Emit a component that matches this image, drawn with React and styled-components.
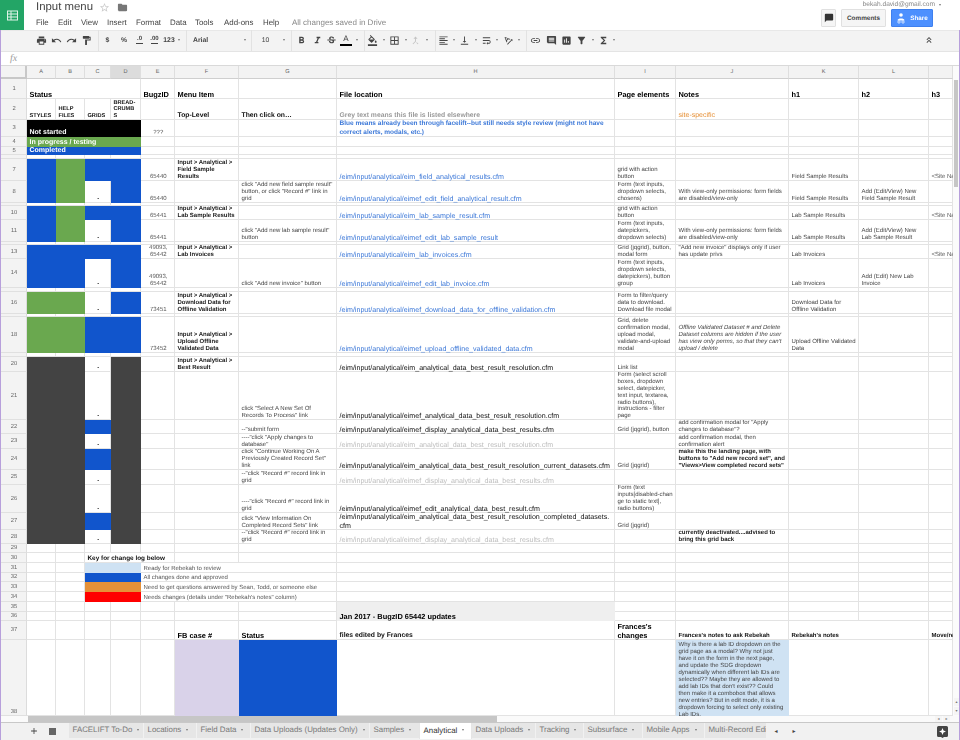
import React from 'react';
import styled, { createGlobalStyle, css } from 'styled-components';
import {
  MdPrint, MdUndo, MdRedo, MdFormatPaint, MdFormatBold, MdFormatItalic, MdStrikethroughS,
  MdFormatColorFill, MdBorderAll, MdFormatAlignLeft, MdVerticalAlignBottom, MdWrapText,
  MdTextRotationAngleup, MdLink, MdInsertComment, MdInsertChart, MdFilterAlt, MdFunctions,
  MdKeyboardDoubleArrowUp, MdChatBubble, MdAdd, MdStarBorder, MdFolder, MdCallMerge,
} from 'react-icons/md';

const GlobalStyle = createGlobalStyle`
  html, body { margin: 0; height: 100%; overflow: hidden; background: #fff; }
  body { font-family: "Liberation Sans", Arial, sans-serif; text-rendering: geometricPrecision; }
  * { box-sizing: border-box; }
`;

const GRID_COLUMNS = '26px 29px 29px 26px 30px 34px 64px 98px 278px 61px 113px 70px 70px 24px';
const COLS = ['A', 'B', 'C', 'D', 'E', 'F', 'G', 'H', 'I', 'J', 'K', 'L', 'M'];
const LINE = '#e3e3e3';

const BLUE = '#1155cc';
const GREEN = '#6aa84f';
const DARK = '#434343';
const BLACK = '#000000';
const LIGHT = '#cfe2f3';
const ORANGE = '#e69138';
const RED = '#ff0000';
const LILAC = '#d9d2e9';
const GREY = '#efefef';

const Page = styled.div`
  width: 960px;
  height: 740px;
  display: flex;
  flex-direction: column;
  overflow: hidden;
  filter: blur(0.3px);
`;

const Header = styled.header`
  height: 30px;
  display: flex;
  flex: none;
`;

const Logo = styled.div`
  width: 24px;
  height: 30px;
  background: #23a566;
  display: flex;
  align-items: center;
  justify-content: center;
  margin-right: 12px;
`;

const TitleBlock = styled.div`
  display: flex;
  flex-direction: column;
`;

const TitleRow = styled.div`
  display: flex;
  align-items: center;
  height: 14px;
  color: #bbb;
`;

const Title = styled.span`
  font-size: 11.4px;
  color: #444;
  width: 63px;
`;

const Star = styled(MdStarBorder)`
  width: 11px;
  height: 11px;
  color: #ccc;
  margin-right: 7px;
`;

const Folder = styled(MdFolder)`
  width: 11px;
  height: 11px;
  color: #777;
`;

const MenuBar = styled.nav`
  display: flex;
  align-items: center;
  height: 14px;
  font-size: 7.9px;
  color: #444;
  margin-top: 1px;
`;

const MenuItem = styled.span`
  width: ${(p) => p.$w}px;
`;

const SavedNote = styled.span`
  font-size: 8px;
  color: #888;
`;

const Account = styled.div`
  margin-left: auto;
  margin-right: 27px;
  display: flex;
  flex-direction: column;
  align-items: flex-end;
`;

const Email = styled.div`
  height: 8px;
  font-size: 6.6px;
  line-height: 6px;
  color: #888;
  display: flex;
  align-items: center;
  gap: 4px;
  margin-right: -8px;
  padding-top: 1px;
`;

const Actions = styled.div`
  display: flex;
  gap: 5px;
  margin-top: 1px;
`;

const GreyButton = styled.div`
  height: 18px;
  width: ${(p) => p.$w}px;
  background: #f5f5f5;
  border: 1px solid #e0e0e0;
  border-radius: 1px;
  display: flex;
  align-items: center;
  justify-content: center;
  font-size: 6.4px;
  font-weight: bold;
  color: #444;
  svg { width: 10px; height: 10px; color: #333; }
`;

const ShareButton = styled.div`
  height: 18px;
  width: 42px;
  background: #4d90fe;
  border: 1px solid #3f80ee;
  border-radius: 1px;
  display: flex;
  align-items: center;
  justify-content: center;
  gap: 4px;
  font-size: 6.3px;
  font-weight: bold;
  color: #fff;
`;

const Main = styled.main`
  flex: 1;
  min-height: 0;
  display: flex;
  flex-direction: column;
  border-left: 1px solid #b79fdb;
  border-right: 1px solid #b79fdb;
`;

const Toolbar = styled.div`
  height: 22px;
  flex: none;
  background: #f3f3f3;
  border-top: 1px solid #e8e8e8;
  border-bottom: 1px solid #e4e4e4;
  display: flex;
  align-items: center;
  padding-left: 32px;
  padding-bottom: 2px;
  color: #444;
`;

const Tool = styled.span`
  width: ${(p) => p.$w}px;
  flex: none;
  display: flex;
  align-items: center;
  justify-content: ${(p) => (p.$left ? 'flex-start' : 'center')};
  padding-left: ${(p) => p.$pad || 0}px;
  font-size: 6.4px;
  font-weight: bold;
  color: ${(p) => (p.$off ? '#c4c4c4' : '#444')};
  svg { width: 11px; height: 11px; }
`;

const ToolLabel = styled.span`
  font-size: 6.8px;
  color: #444;
  font-weight: ${(p) => (p.$plain ? 'normal' : 'bold')};
`;

const DecimalArrow = styled.span`
  display: inline-flex;
  flex-direction: column;
  align-items: center;
  font-size: 6px;
  line-height: 6px;
  height: 9px;
  &::after {
    content: '';
    width: 7px;
    height: 1px;
    margin-top: 1px;
    background: #444;
  }
`;

const TextColor = styled.span`
  display: inline-flex;
  flex-direction: column;
  align-items: center;
  font-size: 8px;
  line-height: 8px;
  font-weight: normal;
  &::after {
    content: '';
    width: 12px;
    height: 2px;
    margin-top: 1px;
    background: #000;
  }
`;

const Caret = styled.i`
  display: block;
  width: 0;
  height: 0;
  border-left: 1.5px solid transparent;
  border-right: 1.5px solid transparent;
  border-top: 2px solid #777;
`;

const ToolDivider = styled.span`
  width: 1px;
  height: 21px;
  flex: none;
  background: #e2e2e2;
  margin-left: ${(p) => p.$gap ?? 4}px;
`;

const Collapse = styled.span`
  margin-left: auto;
  margin-right: 25px;
  display: flex;
  svg { width: 10px; height: 10px; color: #444; }
`;

const FormulaBar = styled.div`
  height: 14px;
  flex: none;
  background: #fff;
  border-bottom: 1px solid #d9d9d9;
  display: flex;
  align-items: center;
  padding-left: 9px;
  font-family: "Liberation Serif", serif;
  font-style: italic;
  font-size: 10px;
  color: #999;
`;

const Body = styled.div`
  height: 650px;
  flex: none;
  display: flex;
`;

const Sheet = styled.div`
  width: 952px;
  flex: none;
  overflow: hidden;
`;

const Row = styled.div`
  display: grid;
  grid-template-columns: ${GRID_COLUMNS};
  grid-template-rows: ${(p) => p.$h}px;
  height: ${(p) => p.$h}px;
`;

const ColHead = styled.div`
  background: ${(p) => (p.$on ? '#dcdcdc' : '#f3f3f3')};
  border-right: 1px solid #dedede;
  border-bottom: 1px solid #cfcfcf;
  display: flex;
  align-items: center;
  justify-content: center;
  font-size: 5.6px;
  color: #666;
`;

const Corner = styled(ColHead)`
  border-right: 2px solid #c8c8c8;
  border-bottom: 2px solid #c8c8c8;
`;

const RowNumber = styled.div`
  background: #f3f3f3;
  border-right: 1px solid #dcdcdc;
  border-bottom: 1px solid #e0e0e0;
  display: flex;
  align-items: ${(p) => (p.$low ? 'flex-end' : 'center')};
  justify-content: center;
  padding-left: 1px;
  overflow: hidden;
  font-size: 5.8px;
  color: #666;
`;

const kinds = {
  head: css`font-size: 7.4px; line-height: 8px; font-weight: bold; color: #000; white-space: nowrap;`,
  tall: css`font-size: 7.4px; line-height: 9px; font-weight: bold; color: #000;`,
  sub: css`font-size: 6.8px; line-height: 8px; font-weight: bold; color: #111; white-space: nowrap;`,
  status: css`font-size: 5.6px; line-height: 6.8px; font-weight: bold; color: #111; white-space: pre-line;`,
  invert: css`font-size: 7px; line-height: 8px; font-weight: bold; color: #fff; white-space: nowrap;`,
  bug: css`font-size: 6px; line-height: 7px; color: #555; justify-content: center; text-align: center;`,
  menu: css`font-size: 6px; line-height: 7px; font-weight: bold; color: #222;`,
  small: css`font-size: 6px; line-height: 7px; color: #444; white-space: pre-line;`,
  dense: css`font-size: 6px; line-height: 6.8px; color: #444;`,
  italic: css`font-size: 6px; line-height: 7px; font-style: italic; color: #444;`,
  strong: css`font-size: 6px; line-height: 7px; font-weight: bold; color: #222;`,
  flat: css`font-size: 6px; line-height: 7px; color: #555; white-space: nowrap;`,
  dash: css`font-size: 6px; line-height: 7px; font-weight: bold; color: #222; justify-content: center;`,
  path: css`font-size: 7.1px; line-height: 8.4px; color: #3c78d8; white-space: pre-line;`,
  pathBlack: css`font-size: 7.1px; line-height: 8.4px; color: #111; white-space: pre-line;`,
  pathGrey: css`font-size: 7.1px; line-height: 8.4px; color: #bdbdbd; white-space: pre-line;`,
  greyNote: css`font-size: 6.8px; line-height: 8px; font-weight: bold; color: #999; white-space: nowrap;`,
  blueNote: css`font-size: 6.5px; line-height: 8.4px; font-weight: bold; color: #3c78d8;`,
  orange: css`font-size: 7px; line-height: 8px; color: #e69138; white-space: nowrap;`,
  key: css`font-size: 6.4px; line-height: 8px; font-weight: bold; color: #111; white-space: nowrap;`,
  noteHead: css`font-size: 6px; line-height: 7px; font-weight: bold; color: #111; white-space: nowrap;`,
};

const Cell = styled.div`
  grid-column: span ${(p) => p.$span};
  min-width: 0;
  overflow: hidden;
  display: flex;
  align-items: ${(p) => (p.$top ? 'flex-start' : 'flex-end')};
  padding: ${(p) => (p.$top ? '1.5px' : '0')} 2px 0 2.5px;
  background: ${(p) => p.$bg || 'transparent'};
  box-shadow: inset -1px -1px 0 ${(p) => p.$bg || LINE};
  ${(p) => kinds[p.$kind]}
`;

const VScroll = styled.div`
  width: 6px;
  flex: none;
  background: #fbfbfb;
  display: flex;
  flex-direction: column;
  padding-left: 1px;
`;

const VThumb = styled.div`
  width: 4px;
  height: 107px;
  margin-top: 14px;
  background: #c6c6c6;
`;

const ScrollArrow = styled.div`
  width: ${(p) => p.$w || 5}px;
  height: ${(p) => p.$h || 8}px;
  display: flex;
  align-items: center;
  justify-content: center;
  font-size: 4px;
  line-height: 4px;
  color: #777;
  background: #f5f5f5;
`;

const VArrows = styled.div`
  margin-top: auto;
  display: flex;
  flex-direction: column;
  gap: 1px;
  margin-bottom: 1px;
`;

const HScroll = styled.div`
  height: 6px;
  flex: none;
  display: flex;
  align-items: stretch;
  background: #fafafa;
  padding-left: 27px;
`;

const HThumb = styled.div`
  width: 469px;
  background: #c6c6c6;
`;

const HArrows = styled.div`
  margin-left: auto;
  margin-right: 9px;
  display: flex;
  gap: 1px;
`;

const TabBar = styled.div`
  height: 18px;
  flex: none;
  background: #f1f1f1;
  border-top: 1px solid #c8c8c8;
  display: flex;
  align-items: flex-start;
  color: #666;
`;

const TabTool = styled.span`
  width: ${(p) => p.$w}px;
  height: 16px;
  flex: none;
  display: flex;
  align-items: center;
  justify-content: center;
  svg { width: 10px; height: 10px; color: #444; }
`;

const SheetsIcon = styled.span`
  width: 7px;
  height: 7px;
  background: #666;
  display: block;
`;

const TabList = styled.div`
  display: flex;
  gap: 1px;
  margin-left: 6px;
  margin-right: 1px;
  width: 697px;
  overflow: hidden;
  flex: none;
`;

const Tab = styled.div`
  width: ${(p) => p.$w}px;
  flex: none;
  height: ${(p) => (p.$active ? 16 : 15)}px;
  display: flex;
  align-items: center;
  gap: 5px;
  padding-left: 3.5px;
  padding-bottom: 2px;
  font-size: 7.9px;
  white-space: nowrap;
  overflow: hidden;
  color: ${(p) => (p.$active ? '#333' : '#777')};
  background: ${(p) => (p.$active ? '#fff' : '#e6e6e6')};
  box-shadow: ${(p) => (p.$active ? '0 0 1px #aaa' : 'none')};
`;

const PagerArrow = styled.span`
  width: 18px;
  height: 16px;
  flex: none;
  font-size: 6px;
  display: flex;
  align-items: center;
  justify-content: center;
  color: #444;
`;

const Explore = styled.span`
  margin-left: auto;
  margin-right: 11px;
  display: flex;
  align-self: center;
  margin-top: 1px;
`;

const toolbar = [
  { w: 16, icon: <MdPrint /> },
  { w: 15, icon: <MdUndo /> },
  { w: 15, icon: <MdRedo /> },
  { w: 15, icon: <MdFormatPaint /> },
  { div: 1 },
  { w: 17, text: '$' },
  { w: 16, text: '%' },
  { w: 15, icon: <DecimalArrow>.0</DecimalArrow> },
  { w: 15, icon: <DecimalArrow>.00</DecimalArrow> },
  { w: 14, text: '123' },
  { caret: 6 },
  { div: 1 },
  { w: 54, pad: 6, left: true, plain: 'Arial' },
  { caret: 7 },
  { div: 1, gap: 3 },
  { w: 27, plain: '10' },
  { caret: 10 },
  { div: 1, gap: 2 },
  { w: 18, icon: <MdFormatBold /> },
  { w: 14, icon: <MdFormatItalic /> },
  { w: 15, icon: <MdStrikethroughS /> },
  { w: 14, icon: <TextColor>A</TextColor> },
  { caret: 7 },
  { div: 1 },
  { w: 15, icon: <MdFormatColorFill /> },
  { caret: 7 },
  { w: 15, icon: <MdBorderAll /> },
  { caret: 7 },
  { w: 13, icon: <MdCallMerge />, off: true },
  { caret: 9 },
  { div: 1 },
  { w: 15, icon: <MdFormatAlignLeft /> },
  { caret: 6 },
  { w: 15, icon: <MdVerticalAlignBottom /> },
  { caret: 7 },
  { w: 15, icon: <MdWrapText /> },
  { caret: 6 },
  { w: 16, icon: <MdTextRotationAngleup /> },
  { caret: 6 },
  { div: 1 },
  { w: 16, icon: <MdLink /> },
  { w: 16, icon: <MdInsertComment /> },
  { w: 15, icon: <MdInsertChart /> },
  { w: 15, icon: <MdFilterAlt /> },
  { caret: 7 },
  { w: 14, icon: <MdFunctions /> },
  { caret: 7 },
];

const menus = [
  ['File', 22], ['Edit', 23], ['View', 26], ['Insert', 29], ['Format', 34],
  ['Data', 25], ['Tools', 29], ['Add-ons', 39], ['Help', 29],
];

const tabs = [
  ['FACELIFT To-Do', 74], ['Locations', 52], ['Field Data', 53],
  ['Data Uploads (Updates Only)', 118], ['Samples', 49], ['Analytical', 51, true],
  ['Data Uploads', 63], ['Tracking', 47], ['Subsurface', 58], ['Mobile Apps', 61],
  ['Multi-Record Edit', 61],
];

const status = (a, b, c, d) => ({
  A: { bg: a },
  B: { bg: b },
  C: c ? { bg: c } : { t: '-', kind: 'dash' },
  D: { bg: d },
});

const best = (c) => status(DARK, DARK, c, DARK);
const black = (t) => ({ t, kind: 'pathBlack' });
const grey = (t) => ({ t, kind: 'pathGrey' });
const strong = (t) => ({ t, kind: 'strong' });
const head = (t) => ({ t, kind: 'head' });
const siteName = { t: '<Site Name>', kind: 'flat' };
const VIEW_ONLY = 'With view-only permissions: form fields are disabled/view-only';
const P = '/eim/input/analytical/';
const key = (bg, t) => ({
  C: { bg, span: 2 },
  E: { t, span: 3, kind: 'flat' },
});

const rows = [
  [1, 20, {
    A: { ...head('Status'), span: 4 }, E: head('BugzID'), F: head('Menu Item'), H: head('File location'),
    I: head('Page elements'), J: head('Notes'), K: head('h1'), L: head('h2'), M: head('h3'),
  }],
  [2, 21, {
    A: { t: 'STYLES', kind: 'status' }, B: { t: 'HELP\nFILES', kind: 'status' }, C: { t: 'GRIDS', kind: 'status' },
    D: { t: 'BREAD-\nCRUMB\nS', kind: 'status' }, F: { t: 'Top-Level', kind: 'sub' }, G: { t: 'Then click on…', kind: 'sub' },
    H: { t: 'Grey text means this file is listed elsewhere', kind: 'greyNote' }, J: { t: 'site-specific', kind: 'orange' },
  }],
  [3, 17, {
    A: { t: 'Not started', kind: 'invert', bg: BLACK, span: 4 }, E: '???',
    H: { t: 'Blue means already been through facelift--but still needs style review (might not have correct alerts, modals, etc.)', kind: 'blueNote' },
  }],
  [4, 10, { A: { t: 'In progress / testing', kind: 'invert', bg: GREEN, span: 4 } }],
  [5, 8, { A: { t: 'Completed', kind: 'invert', bg: BLUE, span: 4 } }],
  [6, 4, {}],
  [7, 22, {
    ...status(BLUE, GREEN, BLUE, BLUE), E: '65440', F: 'Input > Analytical > Field Sample Results',
    H: `${P}eim_field_analytical_results.cfm`, I: 'grid with action button', K: 'Field Sample Results', M: siteName,
  }],
  [8, 22, {
    ...status(BLUE, GREEN, null, BLUE), E: '65440',
    G: 'click "Add new field sample result" button, or click "Record #" link in grid',
    H: `${P}eimef_edit_field_analytical_result.cfm`, I: 'Form (text inputs, dropdown selects, chosens)',
    J: VIEW_ONLY, K: 'Field Sample Results', L: 'Add (Edit/View) New Field Sample Result',
  }],
  [9, 3, {}],
  [10, 14, {
    ...status(BLUE, GREEN, BLUE, BLUE), E: '65441', F: 'Input > Analytical > Lab Sample Results',
    H: `${P}eim_lab_sample_result.cfm`, I: 'grid with action button', K: 'Lab Sample Results', M: siteName,
  }],
  [11, 22, {
    ...status(BLUE, GREEN, null, BLUE), E: '65441', G: 'click "Add new lab sample result" button',
    H: `${P}eimef_edit_lab_sample_result`, I: 'Form (text inputs, datepickers, dropdown selects)',
    J: VIEW_ONLY, K: 'Lab Sample Results', L: 'Add (Edit/View) New Lab Sample Result',
  }],
  [12, 3, {}],
  [13, 14, {
    ...status(BLUE, BLUE, BLUE, BLUE), E: '49093, 65442', F: 'Input > Analytical > Lab Invoices',
    H: `${P}eim_lab_invoices.cfm`, I: 'Grid (jqgrid), button, modal form',
    J: '"Add new invoice" displays only if user has update privs', K: 'Lab Invoices', M: siteName,
  }],
  [14, 29, {
    ...status(BLUE, BLUE, null, BLUE), E: '49093, 65442', G: 'click "Add new invoice" button',
    H: `${P}eimef_edit_lab_invoice.cfm`, I: 'Form (text inputs, dropdown selects, datepickers), button group',
    K: 'Lab Invoices', L: 'Add (Edit) New Lab Invoice',
  }],
  [15, 4, {}],
  [16, 22, {
    ...status(GREEN, GREEN, null, BLUE), E: '73451', F: 'Input > Analytical > Download Data for Offline Validation',
    H: `${P}eimef_download_data_for_offline_validation.cfm`, I: 'Form to filter/query data to download. Download file modal',
    K: 'Download Data for Offline Validation',
  }],
  [17, 3, {}],
  [18, 36, {
    ...status(GREEN, GREEN, BLUE, BLUE), E: '73452', F: 'Input > Analytical > Upload Offline Validated Data',
    H: `${P}eimef_upload_offline_validated_data.cfm`, I: 'Grid, delete confirmation modal, upload modal, validate-and-upload modal',
    J: { t: "Offline Validated Dataset # and Delete Dataset columns are hidden if the user has view only perms, so that they can't upload / delete", kind: 'italic' },
    K: 'Upload Offline Validated Data',
  }],
  [19, 4, {}],
  [20, 15, {
    ...best(null), F: 'Input > Analytical > Best Result',
    H: black(`${P}eim_analytical_data_best_result_resolution.cfm`), I: 'Link list',
  }],
  [21, 48, {
    ...best(null), G: 'click "Select A New Set Of\nRecords To Process" link',
    H: black(`${P}eimef_analytical_data_best_result_resolution.cfm`),
    I: { t: 'Form (select scroll boxes, dropdown select, datepicker, text input, textarea, radio buttons), instructions - filter page', kind: 'dense' },
  }],
  [22, 14, {
    ...best(BLUE), G: '--"submit form', H: black(`${P}eimef_display_analytical_data_best_results.cfm`),
    I: 'Grid (jqgrid), button', J: 'add confirmation modal for "Apply changes to database"?',
  }],
  [23, 15, {
    ...best(null), G: '----"click "Apply changes to database"', H: grey(`${P}eim_analytical_data_best_result_resolution.cfm`),
    J: 'add confirmation modal, then confirmation alert',
  }],
  [24, 21, {
    ...best(BLUE), G: 'click "Continue Working On A Previously Created Record Set" link',
    H: black(`${P}eim_analytical_data_best_result_resolution_current_datasets.cfm`), I: 'Grid (jqgrid)',
    J: strong('make this the landing page, with buttons to "Add new record set", and "Views>View completed record sets"'),
  }],
  [25, 15, {
    ...best(null), G: '--"click "Record #" record link in grid', H: grey(`${P}eimef_display_analytical_data_best_results.cfm`),
  }],
  [26, 28, {
    ...best(null), G: '----"click "Record #" record link in grid', H: black(`${P}eimef_edit_analytical_data_best_result.cfm`),
    I: 'Form (text\ninputs[disabled-chan\nge to static text],\nradio buttons)',
  }],
  [27, 17, {
    ...best(BLUE), G: 'click "View Information On Completed Record Sets" link',
    H: black(`${P}eim_analytical_data_best_result_resolution_completed_datasets.\ncfm`), I: 'Grid (jqgrid)',
  }],
  [28, 14, {
    ...best(null), G: '--"click "Record #" record link in grid', H: grey(`${P}eimef_display_analytical_data_best_results.cfm`),
    J: strong('currently deactivated....advised to bring this grid back'),
  }],
  [29, 9, {}],
  [30, 10, { C: { t: 'Key for change log below', kind: 'key', span: 3 } }],
  [31, 10, key(LIGHT, 'Ready for Rebekah to review')],
  [32, 9, key(BLUE, 'All changes done and approved')],
  [33, 10, key(ORANGE, 'Need to get questions answered by Sean, Todd, or someone else')],
  [34, 10, key(RED, 'Needs changes (details under "Rebekah\'s notes" column)')],
  [35, 10, { H: { bg: GREY } }],
  [36, 9, { H: { t: 'Jan 2017 - BugzID 65442 updates', kind: 'head', bg: GREY } }],
  [37, 19, {
    F: head('FB case #'), G: head('Status'), H: { t: 'files edited by Frances', kind: 'sub' },
    I: { t: "Frances's changes", kind: 'tall' }, J: { t: "Frances's notes to ask Rebekah", kind: 'noteHead' },
    K: { t: "Rebekah's notes", kind: 'noteHead', span: 2 }, M: { t: 'Move/re', kind: 'noteHead' },
  }],
  [38, 76, {
    F: { bg: LILAC }, G: { bg: BLUE },
    J: {
      t: "Why is there a lab ID dropdown on the\ngrid page as a modal? Why not just\nhave it on the form in the next page,\nand update the SDG dropdown\ndynamically when different lab IDs are\nselected?? Maybe they are allowed to\nadd lab IDs that don't exist?? Could\nthen make it a combobox that allows\nnew entries? But in edit mode, it is a\ndropdown forcing to select only existing\nLab IDs.",
      bg: LIGHT, top: true,
    },
    K: { span: 2 },
  }],
];

const defaultKind = { E: 'bug', F: 'menu', H: 'path', M: 'flat' };

function SheetRow({ number, height, cells }) {
  const out = [];
  for (let i = 0; i < COLS.length; i += 1) {
    const col = COLS[i];
    const raw = cells[col];
    const cell = typeof raw === 'string' ? { t: raw } : raw || {};
    const span = cell.span || 1;
    out.push(
      <Cell
        key={col}
        $span={span}
        $bg={cell.bg}
        $top={cell.top}
        $kind={cell.kind || defaultKind[col] || 'small'}
      >
        {cell.t}
      </Cell>
    );
    i += span - 1;
  }
  return (
    <Row $h={height}>
      <RowNumber $low={number === 38}>{height > 5 ? number : ''}</RowNumber>
      {out}
    </Row>
  );
}

function ToolbarItems() {
  return toolbar.map((item, i) => {
    if (item.div) return <ToolDivider key={i} $gap={item.gap} />;
    if (item.caret) {
      return (
        <Tool key={i} $w={item.caret}>
          <Caret />
        </Tool>
      );
    }
    return (
      <Tool key={i} $w={item.w} $pad={item.pad} $left={item.left} $off={item.off}>
        {item.icon}
        {item.text && <ToolLabel>{item.text}</ToolLabel>}
        {item.plain && <ToolLabel $plain={item.plain !== 'Arial'}>{item.plain}</ToolLabel>}
      </Tool>
    );
  });
}

export default function App() {
  return (
    <Page>
      <GlobalStyle />
      <Header>
        <Logo>
          <svg width="11" height="11" viewBox="0 0 11 11">
            <rect x="0.5" y="1" width="10" height="9" fill="none" stroke="#dff3e7" />
            <path d="M0.5 4h10M0.5 7h10M4 1v9" stroke="#dff3e7" fill="none" />
          </svg>
        </Logo>
        <TitleBlock>
          <TitleRow>
            <Title>Input menu</Title>
            <Star />
            <Folder />
          </TitleRow>
          <MenuBar>
            {menus.map(([name, w]) => (
              <MenuItem key={name} $w={w}>{name}</MenuItem>
            ))}
            <SavedNote>All changes saved in Drive</SavedNote>
          </MenuBar>
        </TitleBlock>
        <Account>
          <Email>
            bekah.david@gmail.com
            <Caret />
          </Email>
          <Actions>
            <GreyButton $w={15}><MdChatBubble /></GreyButton>
            <GreyButton $w={45}>Comments</GreyButton>
            <ShareButton>
              <svg width="10" height="11" viewBox="0 0 10 11">
                <circle cx="5" cy="2" r="1.8" fill="#fff" />
                <path d="M1.5 7.5c0-2.6 7-2.6 7 0z" fill="#fff" />
                <circle cx="3" cy="9" r="1.2" fill="none" stroke="#fff" strokeWidth="0.7" />
                <circle cx="7" cy="9" r="1.2" fill="none" stroke="#fff" strokeWidth="0.7" />
              </svg>
              Share
            </ShareButton>
          </Actions>
        </Account>
      </Header>
      <Main>
        <Toolbar>
          <ToolbarItems />
          <Collapse><MdKeyboardDoubleArrowUp /></Collapse>
        </Toolbar>
        <FormulaBar>fx</FormulaBar>
        <Body>
          <Sheet>
            <Row $h={13}>
              <Corner />
              {COLS.map((c) => (
                <ColHead key={c} $on={c === 'D'}>{c === 'M' ? '' : c}</ColHead>
              ))}
            </Row>
            {rows.map(([number, height, cells]) => (
              <SheetRow key={number} number={number} height={height} cells={cells} />
            ))}
          </Sheet>
          <VScroll>
            <VThumb />
            <VArrows>
              <ScrollArrow>▴</ScrollArrow>
              <ScrollArrow>▾</ScrollArrow>
            </VArrows>
          </VScroll>
        </Body>
        <HScroll>
          <HThumb />
          <HArrows>
            <ScrollArrow $w={7} $h={6}>◂</ScrollArrow>
            <ScrollArrow $w={7} $h={6}>▸</ScrollArrow>
          </HArrows>
        </HScroll>
        <TabBar>
          <TabTool $w={26} />
          <TabTool $w={14}><MdAdd /></TabTool>
          <TabTool $w={22}><SheetsIcon /></TabTool>
          <TabList>
            {tabs.map(([name, w, active]) => (
              <Tab key={name} $w={w} $active={active}>
                {name}
                <Caret />
              </Tab>
            ))}
          </TabList>
          <PagerArrow>◂</PagerArrow>
          <PagerArrow>▸</PagerArrow>
          <Explore>
            <svg width="11" height="12" viewBox="0 0 11 12">
              <path d="M1.5 0h8A1.5 1.5 0 0 1 11 1.5v8A1.5 1.5 0 0 1 9.5 11H7l-1.5 1L4 11H1.5A1.5 1.5 0 0 1 0 9.5v-8A1.5 1.5 0 0 1 1.5 0z" fill="#444" />
              <path d="M5.5 2l1 2.5 2.5 1-2.5 1-1 2.5-1-2.5-2.5-1 2.5-1z" fill="#fff" />
            </svg>
          </Explore>
        </TabBar>
      </Main>
    </Page>
  );
}
